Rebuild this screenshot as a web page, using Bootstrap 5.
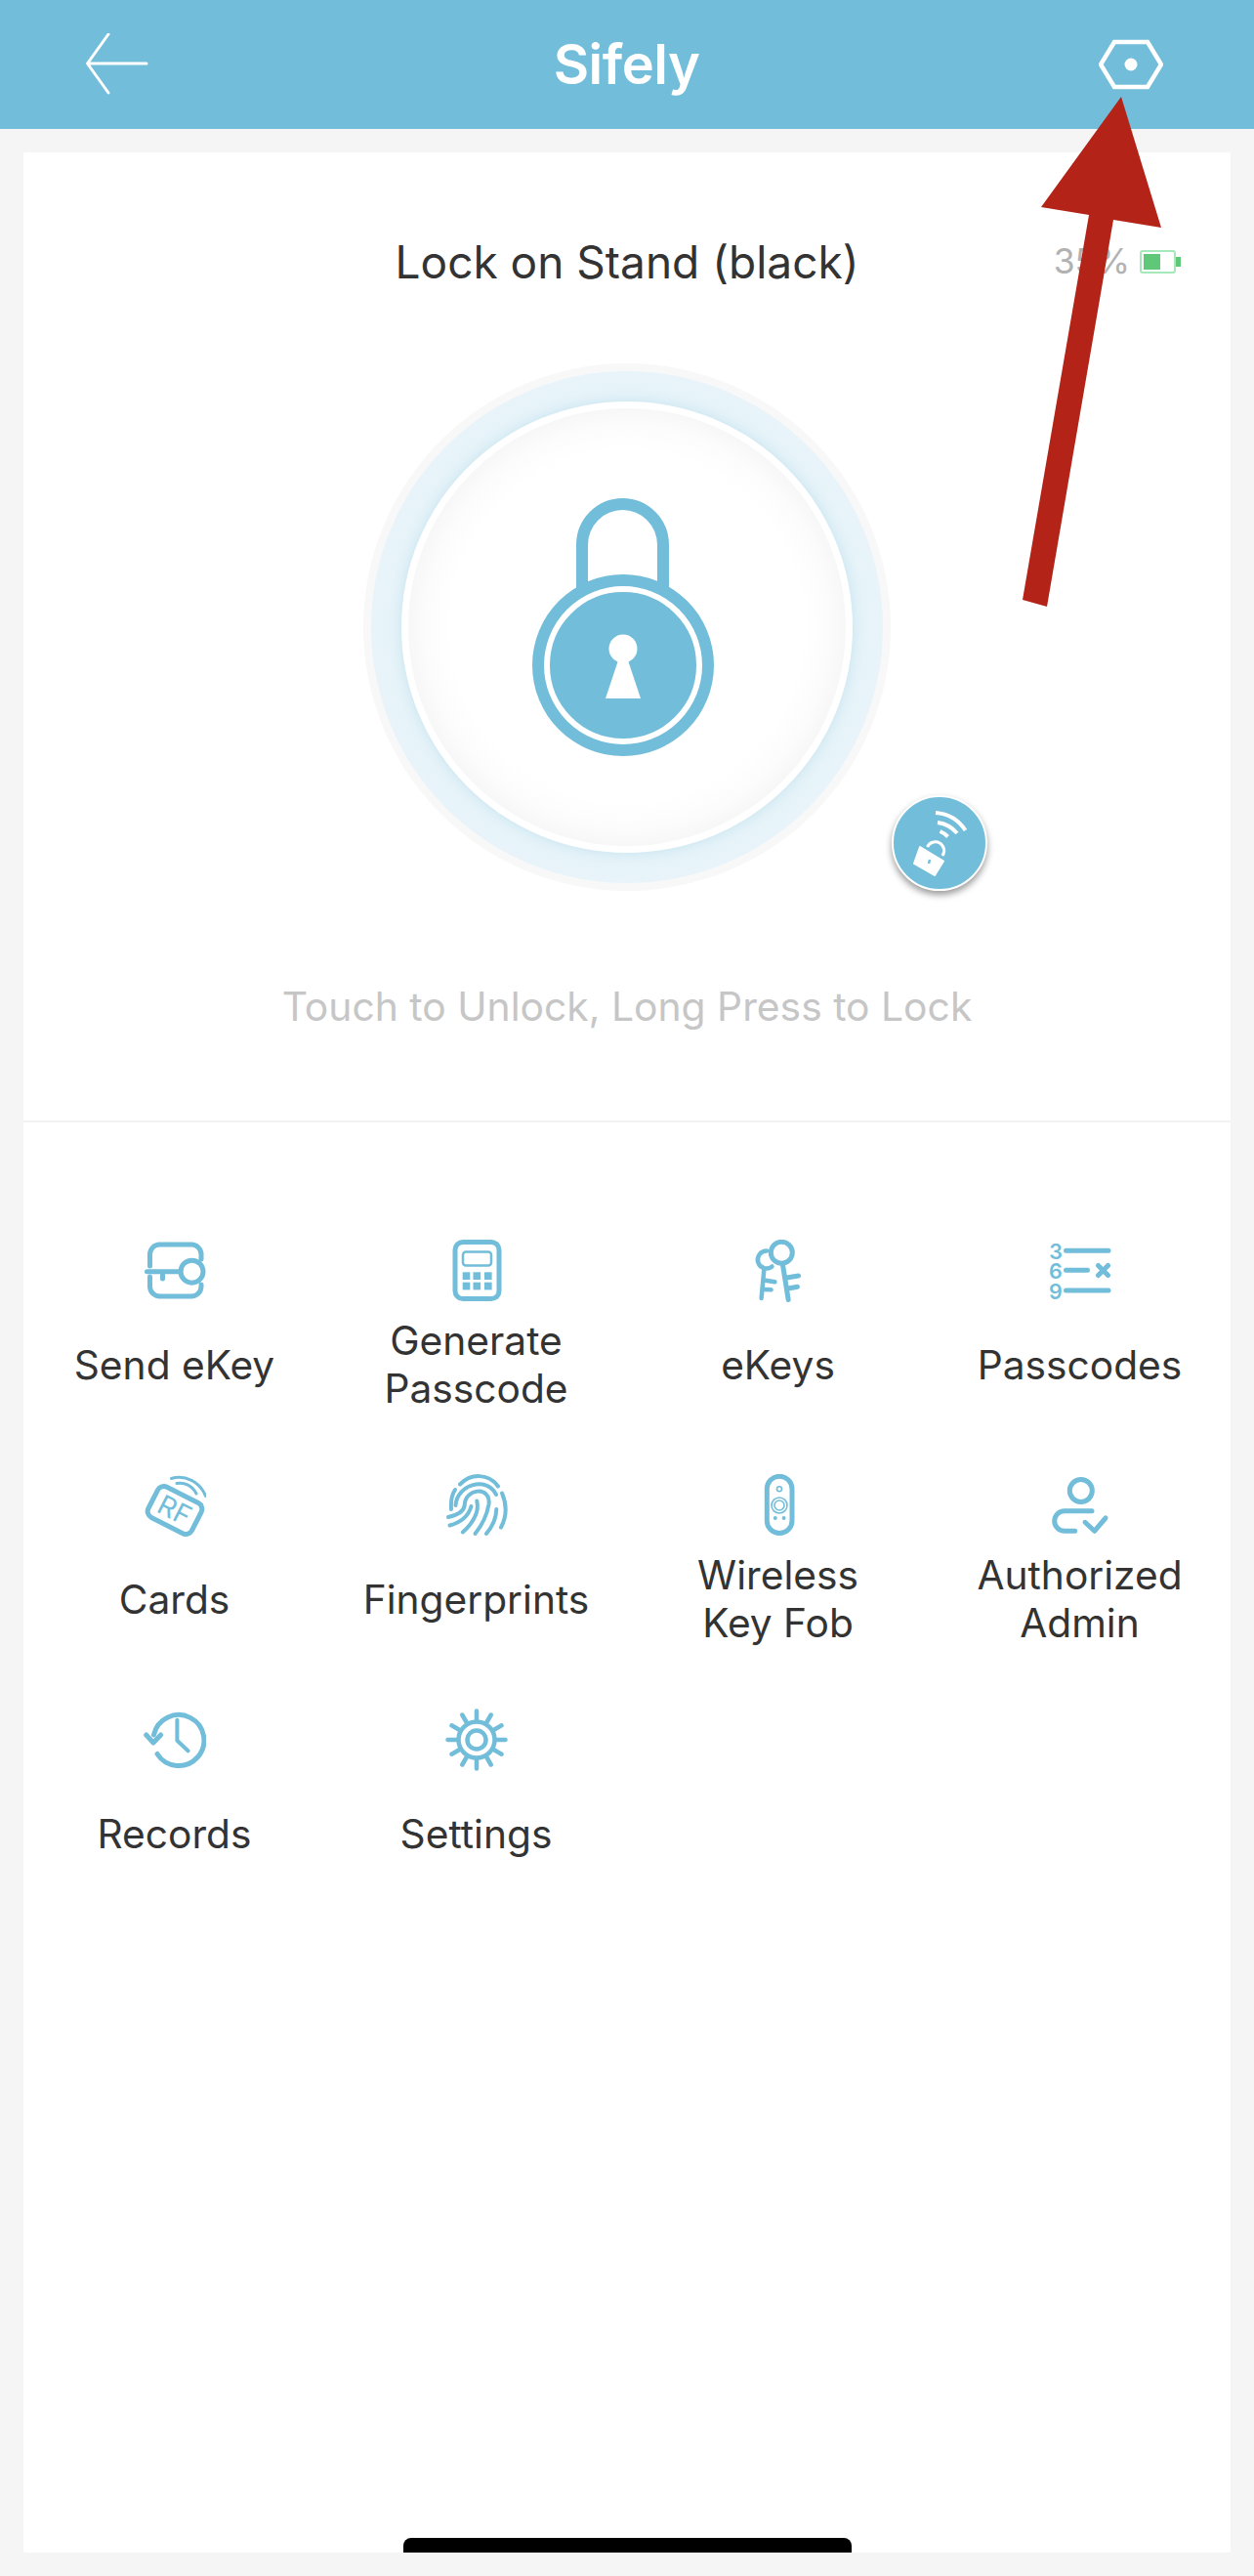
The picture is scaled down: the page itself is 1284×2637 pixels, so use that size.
<!doctype html>
<html lang="en">
<head>
<meta charset="utf-8">
<title>Sifely</title>
<link rel="stylesheet" href="https://cdn.jsdelivr.net/npm/bootstrap@5.3.0/dist/css/bootstrap.min.css">
<style>
html,body{width:1284px;height:2637px;margin:0}
body{background:#f5f5f5;font-family:Inter,"Liberation Sans",sans-serif;color:#333;position:relative;overflow:hidden}
.top-bar{height:132px;background:#72bdd9;padding:0 93px 0 88px;flex-wrap:nowrap}
.top-title{font-size:56px;font-weight:600;color:#fff;line-height:1;letter-spacing:-.5px}
.panel{margin:24px 24px 0;height:2457px;border:0;border-radius:2px;background:#fff}
.lock-area{padding:82px 0 92px;border-bottom:2px solid #f3f3f3}
.head-row{display:grid;grid-template-columns:1fr auto 1fr;align-items:center;height:60px;padding:0 51px}
.lock-name{font-size:46px;line-height:60px;color:#333}
.batt-txt{font-size:35.5px;color:#b2b2b2;line-height:1;margin-right:2px}
.dial-wrap{width:540px;height:540px;margin:74px auto 0;position:relative}
.ring-a{width:540px;height:540px;background:#f8f8f8}
.ring-b{width:524px;height:524px;background:radial-gradient(circle closest-side,#deeff6 88%,#e6f3f9 93%,#e8f4fa 100%)}
.ring-c{width:462px;height:462px;background:#fff;box-shadow:0 0 8px rgba(114,189,217,.15)}
.ring-d{width:448px;height:448px;background:radial-gradient(circle closest-side,#fff 80%,#fcfcfc 92%,#f7f7f7 100%)}
.near-btn{position:absolute;left:541px;top:442px;width:98px;height:98px;background:#72bdd9;border:2px solid #fff;box-shadow:0 4px 7px rgba(0,0,0,.4)}
.hint{margin:93px 0 0;font-size:40.8px;line-height:50px;color:#c6c6c6;text-align:center}
.tools{padding-top:120px}
.tool{height:240px}
.tool svg{width:64px;height:64px;display:block}
.tool-txt{height:98px;margin-top:15px;font-size:40.7px;line-height:49px;color:#333;text-align:center;display:flex;align-items:center;justify-content:center}
.ico{fill:none;stroke:#72bdd9;stroke-width:5;stroke-linecap:round;stroke-linejoin:round}
.ico-fill{fill:#72bdd9;stroke:none}
.home-bar{width:459px;height:15px;background:#000;border-radius:8px 8px 0 0;margin:auto auto 0}
.pointer{position:absolute;left:0;top:0;width:1284px;height:640px;pointer-events:none}
</style>
</head>
<body>
<nav class="navbar top-bar d-flex justify-content-between align-items-center">
  <svg width="70" height="64" viewBox="0 0 70 64" fill="none" stroke="#fff" stroke-width="3" stroke-linecap="round" stroke-linejoin="round"><path d="M62 31H2M23 1 1.5 31 23 61"/></svg>
  <span class="top-title">Sifely</span>
  <svg width="66" height="52" viewBox="0 0 66 52" fill="none" stroke="#fff" stroke-width="4.5" stroke-linejoin="miter"><path d="M16 3H50L64 26 50 49H16L2 26Z"/><circle cx="33" cy="26" r="6.5" fill="#fff" stroke="none"/></svg>
</nav>

<main class="card panel d-flex flex-column">
  <section class="lock-area">
    <div class="head-row">
      <span></span>
      <span class="lock-name">Lock on Stand (black)</span>
      <span class="d-flex justify-content-end align-items-center gap-2">
        <span class="batt-txt">35%</span>
        <svg width="42" height="24" viewBox="0 0 42 24"><rect x="1" y="1" width="35" height="22" rx="2" fill="none" stroke="#a6e8ba" stroke-width="2"/><rect x="4" y="4" width="17" height="16" fill="#5ec878"/><rect x="37" y="7" width="5" height="10" fill="#5ec878"/></svg>
      </span>
    </div>
    <div class="dial-wrap">
      <div class="ring-a rounded-circle d-flex align-items-center justify-content-center">
        <div class="ring-b rounded-circle d-flex align-items-center justify-content-center">
          <div class="ring-c rounded-circle d-flex align-items-center justify-content-center">
            <div class="ring-d rounded-circle d-flex align-items-center justify-content-center">
              <svg width="200" height="280" viewBox="0 0 200 280">
                <path d="M54 110V56A41.5 42 0 0 1 137 56V110" fill="none" stroke="#72bdd9" stroke-width="12"/>
                <circle cx="96" cy="179" r="93" fill="#72bdd9"/>
                <circle cx="96" cy="179" r="78" fill="none" stroke="#fff" stroke-width="6"/>
                <circle cx="96" cy="162" r="14.5" fill="#fff"/>
                <path d="M91 174 78 213H114L101 174Z" fill="#fff"/>
              </svg>
            </div>
          </div>
        </div>
      </div>
      <div class="near-btn rounded-circle">
        <svg width="94" height="94" viewBox="2 2 94 94">
          <path d="M29 53 53 67.5 44 82 23 70Z" fill="#fff" stroke="#fff" stroke-width="2" stroke-linejoin="round"/>
          <path d="M36.5 53A9 9 0 1 1 52 62" fill="none" stroke="#fff" stroke-width="3"/>
          <path d="M39 66 38 70" stroke="#72bdd9" stroke-width="2.5"/>
          <path d="M45 18C58 19 69 26 75.5 36" fill="none" stroke="#fff" stroke-width="4"/>
          <path d="M47 28C55 29 62 33 67 39" fill="none" stroke="#fff" stroke-width="4"/>
          <path d="M49.5 37C52 38 55 40 57.5 42.5" fill="none" stroke="#fff" stroke-width="4"/>
        </svg>
      </div>
    </div>
    <p class="hint">Touch to Unlock, Long Press to Lock</p>
  </section>

  <section class="tools row row-cols-4 g-0">
    <div class="col tool d-flex flex-column align-items-center">
      <svg viewBox="0 0 64 64" class="ico"><path d="M6.5 27V15A10 10 0 0 1 16.5 5H49A10 10 0 0 1 59 15V20"/><path d="M6.5 38V48A10 10 0 0 0 16.5 58H49A10 10 0 0 0 59 48V46"/><circle cx="49.5" cy="32.7" r="11.5"/><path d="M3.5 32.7H38M19.5 33V40"/></svg>
      <div class="tool-txt">Send eKey</div>
    </div>
    <div class="col tool d-flex flex-column align-items-center">
      <svg viewBox="0 0 64 64"><rect x="10" y="2.5" width="45" height="58" rx="8" class="ico"/><rect x="18" y="12.5" width="29" height="14" rx="3" fill="none" stroke="#72bdd9" stroke-width="2.5"/><g class="ico-fill"><rect x="17.7" y="33.3" width="7.6" height="7.7"/><rect x="28.5" y="33.3" width="7.6" height="7.7"/><rect x="40" y="33.3" width="7.6" height="7.7"/><rect x="17.7" y="43.7" width="7.6" height="7.7"/><rect x="28.5" y="43.7" width="7.6" height="7.7"/><rect x="40" y="43.7" width="7.6" height="7.7"/></g></svg>
      <div class="tool-txt">Generate<br>Passcode</div>
    </div>
    <div class="col tool d-flex flex-column align-items-center">
      <svg viewBox="0 0 64 64" class="ico"><circle cx="35.3" cy="13.3" r="11"/><path d="M36.5 26 42.2 61.5M39 39.3 52.5 37M40.8 50.3 51.4 48.3"/><path d="M20 11.5A9 9 0 1 0 25.5 27.5M17.3 31 14.6 60M18.8 41.7 28.4 43.3M18 51 24.6 51.3" stroke-width="4.5"/></svg>
      <div class="tool-txt">eKeys</div>
    </div>
    <div class="col tool d-flex flex-column align-items-center">
      <svg viewBox="0 0 64 64" class="ico"><path d="M17.5 11.3H61M17.5 31.3H39.5M17.5 52H61M50.5 26.5 60.5 36.5M60.5 26.5 50.5 36.5"/><text font-family="Inter,sans-serif" font-size="21.5" font-weight="600" fill="#72bdd9" stroke="none" text-anchor="middle"><tspan x="7" y="19.5">3</tspan><tspan x="7" y="39.5">6</tspan><tspan x="7" y="60.5">9</tspan></text></svg>
      <div class="tool-txt">Passcodes</div>
    </div>

    <div class="col tool d-flex flex-column align-items-center">
      <svg viewBox="0 0 64 64"><rect x="7" y="19.5" width="50" height="35" rx="7" transform="rotate(27 32 37)" class="ico" stroke-width="4.5"/><text x="32" y="47" text-anchor="middle" transform="rotate(27 32 37)" font-family="Inter,sans-serif" font-size="28" font-weight="400" fill="#72bdd9">RF</text><path d="M28.5 4.5C42 0 58 8 63.5 22.5M34 9.5C42 8 50 12 54 20" fill="none" stroke="#72bdd9" stroke-width="3" stroke-linecap="round"/></svg>
      <div class="tool-txt">Cards</div>
    </div>
    <div class="col tool d-flex flex-column align-items-center">
      <svg viewBox="0 0 64 64" class="ico" style="stroke-width:4"><path d="M15 10.5C26 -1 44 -1 54 12.5"/><path d="M10 16C6 22 5.5 29 6 36"/><path d="M58 19.5C63 31 63 43 57 54.5"/><path d="M10.5 32C12 10 43 2 52 21"/><path d="M52.3 36C52 46 48 54 42 61"/><path d="M3 44C12 42 19 38 19.7 32C20 14 47 12 44.5 31C42 45 37 53 30.5 61"/><path d="M32.3 27.5C33.5 33 33 38 30.5 43C27.5 50 23 55 17.8 59.5"/><path d="M4.5 52.5C14 50 23 45 26.5 33"/></svg>
      <div class="tool-txt">Fingerprints</div>
    </div>
    <div class="col tool d-flex flex-column align-items-center">
      <svg viewBox="0 0 64 64"><rect x="20.3" y="2.3" width="25.7" height="58.2" rx="12.8" class="ico" stroke-width="4.5"/><g fill="none" stroke="#72bdd9" stroke-width="1.6"><circle cx="33" cy="15.3" r="2.5"/><circle cx="33" cy="32" r="8"/><circle cx="33" cy="32" r="5"/></g><circle cx="28.8" cy="45" r="2" class="ico-fill"/><circle cx="37.6" cy="45" r="2" class="ico-fill"/></svg>
      <div class="tool-txt">Wireless<br>Key Fob</div>
    </div>
    <div class="col tool d-flex flex-column align-items-center">
      <svg viewBox="0 0 64 64" class="ico"><circle cx="32.8" cy="17" r="11.5"/><path d="M44 37.7H16A10.3 10.3 0 0 0 16 58.3H26.7"/><path d="M37 49.3 46.6 58.3 58 45"/></svg>
      <div class="tool-txt">Authorized<br>Admin</div>
    </div>

    <div class="col tool d-flex flex-column align-items-center">
      <svg viewBox="0 0 64 64" class="ico"><path d="M10.5 27A26 26 0 1 1 14 46.5"/><path d="M2.7 27 10 35 17.6 27"/><path d="M34.4 11.7V32.7L45.5 43.3" stroke-width="4"/></svg>
      <div class="tool-txt">Records</div>
    </div>
    <div class="col tool d-flex flex-column align-items-center">
      <svg viewBox="0 0 64 64" class="ico" style="stroke-width:4.5"><circle cx="32" cy="32" r="18.5"/><circle cx="32" cy="32" r="9.5"/><path d="M32 13V2.5M41.5 15.5 46.7 6.5M48.5 22.5 57.5 17.3M51 32H61.5M48.5 41.5 57.5 46.7M41.5 48.5 46.7 57.5M32 51V61.5M22.5 48.5 17.3 57.5M15.5 41.5 6.5 46.7M13 32H2.5M15.5 22.5 6.5 17.3M22.5 15.5 17.3 6.5"/></svg>
      <div class="tool-txt">Settings</div>
    </div>
  </section>

  <div class="home-bar"></div>
</main>

<svg class="pointer" viewBox="0 0 1284 640"><path d="M1148 99 1066 212 1115 220 1047 614 1072 621 1140 225 1189 233Z" fill="#b32317"/></svg>
<script src="https://cdn.jsdelivr.net/npm/bootstrap@5.3.0/dist/js/bootstrap.bundle.min.js"></script>
</body>
</html>
